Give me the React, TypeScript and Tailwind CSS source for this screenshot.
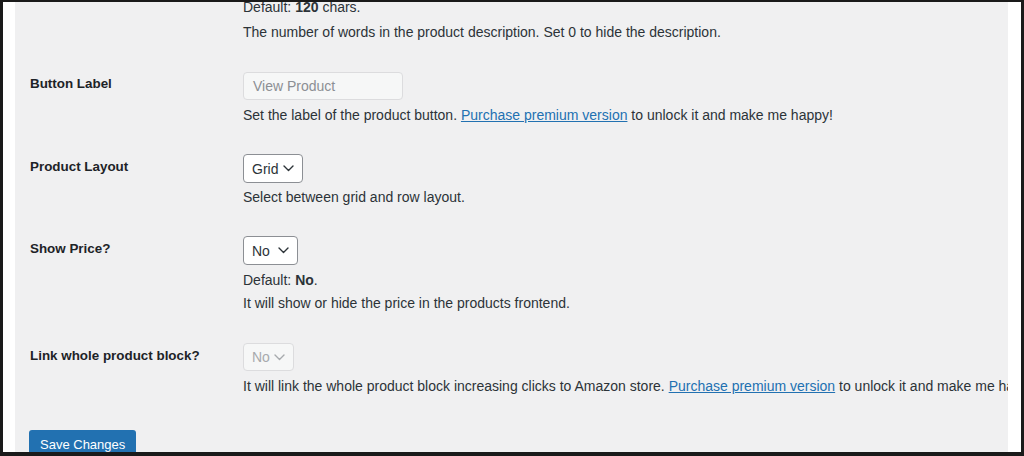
const font = "font-['Liberation_Sans',Arial,sans-serif]";

function Chevron() {
  return (
    <svg width="11" height="7" viewBox="0 0 11 7" fill="none" stroke="currentColor" strokeWidth="1.4" strokeLinecap="round" strokeLinejoin="round">
      <polyline points="1,1 5.5,5.5 10,1" />
    </svg>
  );
}

function Select({ value, width, disabled }: { value: string; width: string; disabled?: boolean }) {
  return (
    <div
      className={`flex items-center justify-between rounded-[4px] border pl-[8px] pr-[8px] ${width} ${
        disabled
          ? "border-[#dcdcde] bg-[#f6f7f7] text-[#a7aaad] h-[28px]"
          : "border-[#8c8f94] bg-white text-[#2c3338] h-[29px]"
      }`}
    >
      <span className="text-[14px]">{value}</span>
      <Chevron />
    </div>
  );
}

function Row({
  label,
  labelTop,
  pt,
  children,
}: {
  label: string;
  labelTop: string;
  pt: string;
  children: React.ReactNode;
}) {
  return (
    <div className={`flex ${pt}`}>
      <div className={`w-[228px] shrink-0 pl-[15px] ${labelTop} font-bold text-[13.4px] leading-[20px] text-[#1d2327]`}>
        {label}
      </div>
      <div className="flex-1 min-w-0">{children}</div>
    </div>
  );
}

export default function App() {
  return (
    <div className={`h-[456px] w-[1024px] bg-[#1a1a1a] pt-[2px] pl-[3px] pr-[3px] pb-[4px] ${font}`}>
      <div className="flex h-full bg-white">
        <div className="w-[12px] shrink-0" />
        <div className="flex-1 overflow-hidden bg-[#f0f0f1] text-[14px] leading-[20px] text-[#2c3338]">
          {/* tail of the previous setting, scrolled half out of view */}
          <div className="pl-[228px] whitespace-nowrap">
            <p className="leading-[10px]">
              Default: <b>120</b> chars.
            </p>
            <p className="mt-[10px]">The number of words in the product description. Set 0 to hide the description.</p>
          </div>

          <Row label="Button Label" labelTop="pt-[2px]" pt="pt-[30px]">
            <div className="flex h-[28px] w-[160px] items-center rounded-[4px] border border-[#dcdcde] bg-[#f6f7f7] px-[9px] text-[#8c8f94]">
              View Product
            </div>
            <p className="mt-[5px] whitespace-nowrap">
              Set the label of the product button.{" "}
              <a href="#" className="text-[#2271b1] underline">
                Purchase premium version
              </a>{" "}
              to unlock it and make me happy!
            </p>
          </Row>

          <Row label="Product Layout" labelTop="pt-[3px]" pt="pt-[29px]">
            <Select value="Grid" width="w-[60px]" />
            <p className="mt-[4px]">Select between grid and row layout.</p>
          </Row>

          <Row label="Show Price?" labelTop="pt-[3px]" pt="pt-[29px]">
            <Select value="No" width="w-[55px]" />
            <p className="mt-[5px]">
              Default: <b>No</b>.
            </p>
            <p className="mt-[3px]">It will show or hide the price in the products frontend.</p>
          </Row>

          <Row label="Link whole product block?" labelTop="pt-[3px]" pt="pt-[30px]">
            <Select value="No" width="w-[51px]" disabled />
            <p className="mt-[5px] whitespace-nowrap">
              It will link the whole product block increasing clicks to Amazon store.{" "}
              <a href="#" className="text-[#2271b1] underline">
                Purchase premium version
              </a>{" "}
              to unlock it and make me happy!
            </p>
          </Row>

          <div className="pt-[34px] pl-[14px]">
            <button className="h-[30px] rounded-[3px] bg-[#2271b1] px-[11px] text-[13px] text-white">
              Save Changes
            </button>
          </div>
        </div>
        <div className="w-[13px] shrink-0" />
      </div>
    </div>
  );
}
